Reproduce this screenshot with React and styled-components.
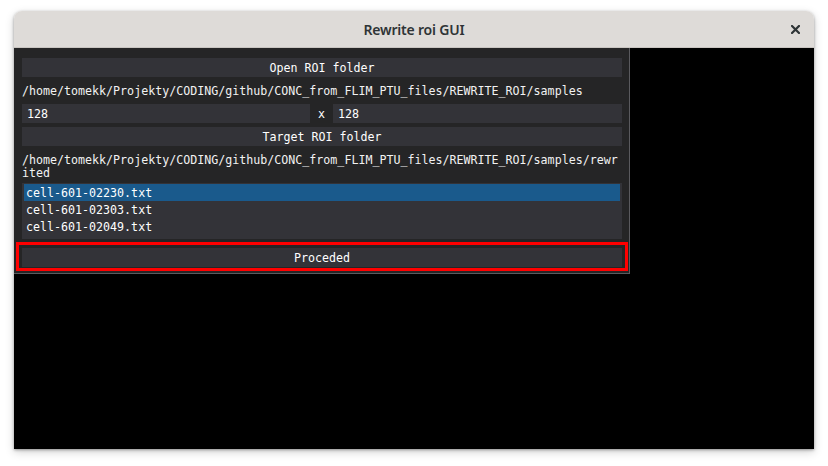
import React from "react";
import styled, { createGlobalStyle } from "styled-components";

const GlobalStyle = createGlobalStyle`
  html, body {
    margin: 0;
    padding: 0;
    background: #ffffff;
  }
`;

const Desktop = styled.div`
  width: 828px;
  height: 466px;
  padding: 11px 0 0 14px;
  box-sizing: border-box;
`;

const Frame = styled.div`
  width: 800px;
  height: 438px;
  display: flex;
  flex-direction: column;
  border-radius: 8px 8px 0 0;
  overflow: hidden;
  box-shadow: 0 1px 3px rgba(0, 0, 0, 0.35), 0 3px 10px rgba(0, 0, 0, 0.18);
`;

const TitleBar = styled.div`
  height: 37px;
  flex: none;
  background: #dedbd8;
  border-bottom: 1px solid #c9c5c1;
  box-sizing: border-box;
  display: flex;
  align-items: center;
  justify-content: center;
  position: relative;
  h1 {
    margin: 0;
    font-family: "Noto Sans", "DejaVu Sans", sans-serif;
    font-size: 14px;
    font-weight: 600;
    color: #2e3436;
    letter-spacing: -0.2px;
  }
`;

const CloseButton = styled.div`
  position: absolute;
  right: 14px;
  top: 14px;
  width: 9px;
  height: 9px;
  display: flex;
`;

const Canvas = styled.div`
  flex: 1;
  background: #000000;
  display: flex;
  align-items: flex-start;
`;

const Panel = styled.div`
  width: 616px;
  box-sizing: border-box;
  background: #252526;
  border-right: 1px solid #5a5a5e;
  border-bottom: 1px solid #5a5a5e;
  padding: 10px 7px 2px 8px;
  display: flex;
  flex-direction: column;
  font-family: "DejaVu Sans Mono", "Liberation Mono", monospace;
  font-size: 11.65px;
  color: #ffffff;
`;

const Button = styled.div`
  height: 19px;
  background: #333338;
  display: flex;
  align-items: center;
  justify-content: center;
  margin-top: ${(p) => p.$gap || 0}px;
  cursor: pointer;
`;

const PathText = styled.div`
  margin-top: ${(p) => p.$gap || 0}px;
  padding: 4px 0 2px;
  line-height: 13px;
  white-space: pre;
  color: #f2f2f2;
`;

const InputRow = styled.div`
  margin-top: 4px;
  display: flex;
  align-items: center;
  height: 19px;
`;

const Input = styled.div`
  height: 19px;
  width: ${(p) => p.$w}px;
  background: #333338;
  display: flex;
  align-items: center;
  padding-left: 5px;
  box-sizing: border-box;
`;

const Times = styled.span`
  width: 23px;
  text-align: center;
`;

const ListBox = styled.div`
  margin-top: 1px;
  height: 56px;
  background: #333338;
  padding: 1px 2px 4px;
  box-sizing: border-box;
  display: flex;
  flex-direction: column;
`;

const ListItem = styled.div`
  height: 17px;
  display: flex;
  align-items: center;
  padding-left: 2px;
  background: ${(p) => (p.$selected ? "#1a5a8c" : "transparent")};
`;

const Highlight = styled.div`
  margin: 3px -6px 0;
  border: 3px solid #ff0000;
  padding: 3px 3px 0;
  height: 29px;
  box-sizing: border-box;
`;

const files = ["cell-601-02230.txt", "cell-601-02303.txt", "cell-601-02049.txt"];

export default function App() {
  return (
    <>
      <GlobalStyle />
      <Desktop>
        <Frame>
          <TitleBar>
            <h1>Rewrite roi GUI</h1>
            <CloseButton>
              <svg width="9" height="9" viewBox="0 0 9 9">
                <path d="M1 1L8 8M8 1L1 8" stroke="#2e3436" strokeWidth="2.2" strokeLinecap="square" />
              </svg>
            </CloseButton>
          </TitleBar>
          <Canvas>
            <Panel>
              <Button>Open ROI folder</Button>
              <PathText $gap={4}>/home/tomekk/Projekty/CODING/github/CONC_from_FLIM_PTU_files/REWRITE_ROI/samples</PathText>
              <InputRow>
                <Input $w={288}>128</Input>
                <Times>x</Times>
                <Input $w={289}>128</Input>
              </InputRow>
              <Button $gap={4}>Target ROI folder</Button>
              <PathText $gap={4}>
                {"/home/tomekk/Projekty/CODING/github/CONC_from_FLIM_PTU_files/REWRITE_ROI/samples/rewr"}
                <br />
                {"ited"}
              </PathText>
              <ListBox>
                {files.map((f, i) => (
                  <ListItem key={f} $selected={i === 0}>{f}</ListItem>
                ))}
              </ListBox>
              <Highlight>
                <Button>Proceded</Button>
              </Highlight>
            </Panel>
          </Canvas>
        </Frame>
      </Desktop>
    </>
  );
}
